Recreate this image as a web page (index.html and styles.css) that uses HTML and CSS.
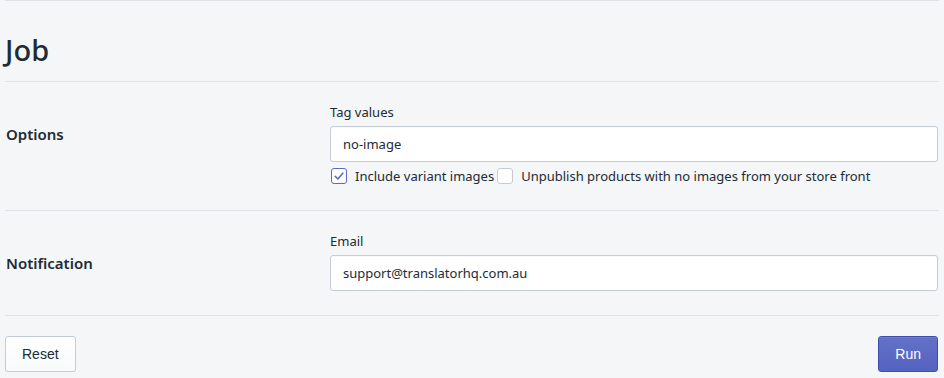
FILE: index.html
```html
<!DOCTYPE html>
<html lang="en">
<head>
<meta charset="utf-8">
<title>Job</title>
<link rel="stylesheet" href="styles.css">
</head>
<body>
<div class="page">
  <header class="page-header">
    <h1 class="title">Job</h1>
  </header>

  <section class="section">
    <div class="section-label">Options</div>
    <div class="section-body">
      <label class="field-label" for="tags">Tag values</label>
      <input id="tags" class="text-input" type="text" value="no-image">
      <div class="check-row">
        <label class="check">
          <span class="box box-checked">
            <svg viewBox="0 0 16 16" width="16" height="16"><path d="M4.2 8.3 L6.9 11 L11.8 5.2" fill="none" stroke="#5c6ac4" stroke-width="1.6" stroke-linecap="round" stroke-linejoin="round"/></svg>
          </span>
          <span class="check-text">Include variant images</span>
        </label>
        <label class="check">
          <span class="box"></span>
          <span class="check-text">Unpublish products with no images from your store front</span>
        </label>
      </div>
    </div>
  </section>

  <section class="section section-last">
    <div class="section-label">Notification</div>
    <div class="section-body">
      <label class="field-label" for="email">Email</label>
      <input id="email" class="text-input" type="text" value="support@translatorhq.com.au">
    </div>
  </section>

  <footer class="page-footer">
    <button class="btn">Reset</button>
    <button class="btn btn-primary">Run</button>
  </footer>
</div>
</body>
</html>
```

FILE: styles.css
```css
html, body {
  margin: 0;
  padding: 0;
  background: #f4f6f8;
}

body {
  font-family: "Noto Sans", "Open Sans", sans-serif;
  color: #212b36;
  font-size: 13px;
}

.page {
  margin: 0 5px 0 5px;
  border-top: 1px solid #dfe3e8;
}

.page-header {
  height: 80px;
  border-bottom: 1px solid #dfe3e8;
  display: flex;
  align-items: flex-start;
}

.title {
  margin: 29px 0 0 0;
  font-size: 29px;
  line-height: 40px;
  font-weight: 500;
  color: #212b36;
}

.section {
  display: grid;
  grid-template-columns: 325px 1fr;
  padding: 20px 1px 24px 0;
  border-bottom: 1px solid #dfe3e8;
}

.section-label {
  margin-top: 22px;
  padding-left: 1px;
  font-size: 15px;
  line-height: 20px;
  font-weight: 600;
  color: #212b36;
}

.section-body {
  display: flex;
  flex-direction: column;
}

.field-label {
  font-size: 13px;
  line-height: 20px;
  margin-bottom: 4px;
  color: #212b36;
}

.text-input {
  box-sizing: border-box;
  height: 36px;
  width: 100%;
  margin: 0;
  padding: 0 12px;
  border: 1px solid #c4cdd5;
  border-radius: 3px;
  background: #fff;
  font-family: inherit;
  font-size: 13px;
  color: #212b36;
  box-shadow: inset 0 1px 0 0 rgba(99,115,129,.05);
}

.check-row {
  display: flex;
  align-items: center;
  margin-top: 4px;
  height: 20px;
  gap: 2px;
}

.check {
  display: flex;
  align-items: center;
  gap: 8px;
  padding-left: 1px;
}

.box {
  box-sizing: border-box;
  width: 16px;
  height: 16px;
  border: 1px solid #c4cdd5;
  border-radius: 3px;
  background: #fff;
  display: flex;
  align-items: center;
  justify-content: center;
}

.box svg {
  display: block;
  flex: none;
}

.box-checked {
  border-color: #5c6ac4;
}

.check-text {
  font-size: 13px;
  line-height: 20px;
  color: #212b36;
}

.page-footer {
  display: flex;
  justify-content: space-between;
  padding: 20px 1px 0 0;
}

.btn {
  box-sizing: border-box;
  height: 36px;
  padding: 0 16px;
  border: 1px solid #c4cdd5;
  border-radius: 3px;
  background: linear-gradient(to bottom, #fff, #f9fafb);
  box-shadow: 0 1px 0 0 rgba(22,29,37,.05);
  font-family: "Liberation Sans", Arial, sans-serif;
  font-size: 14px;
  color: #212b36;
  cursor: pointer;
}

.btn-primary {
  border-color: #3f4eae;
  background: linear-gradient(to bottom, #6371c7, #5563c1);
  color: #fff;
  box-shadow: inset 0 1px 0 0 #6f7bcb, 0 1px 0 0 rgba(22,29,37,.05);
}
```
